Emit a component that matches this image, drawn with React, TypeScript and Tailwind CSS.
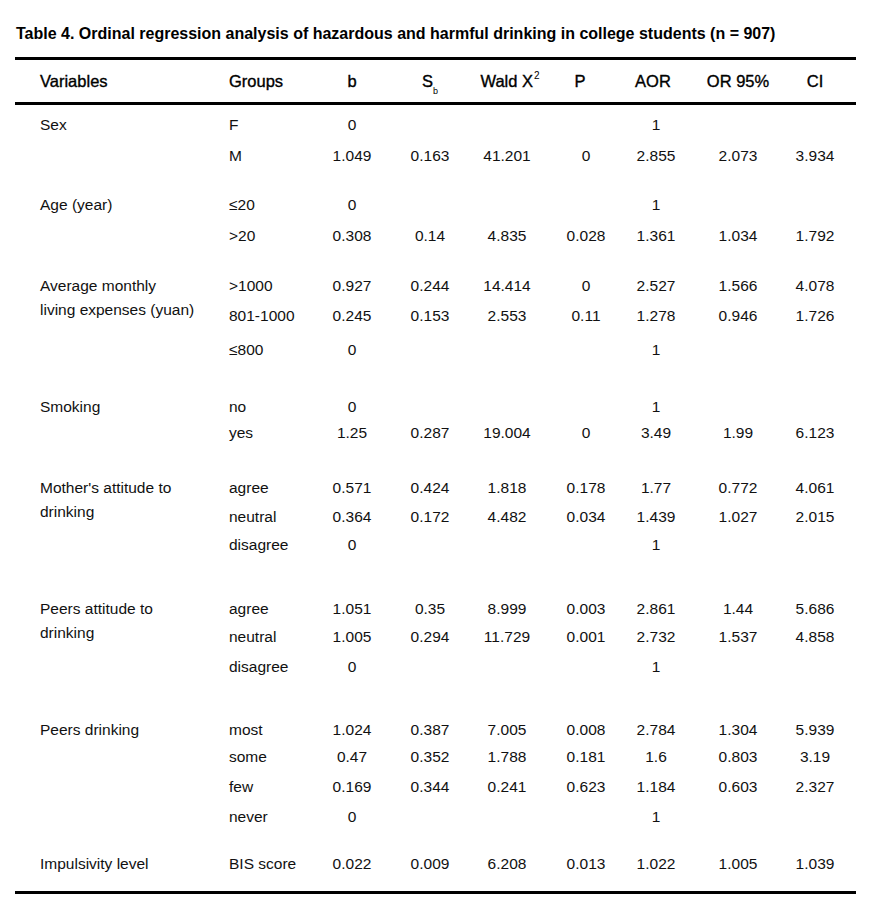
import React from "react";

type Row = {
  group: string;
  vals: string[]; // b, Sb, Wald, P, AOR, OR95, CI
  h: number; // distance to next row top
};

type Block = {
  label: string[];
  rows: Row[];
};

const blocks: Block[] = [
  {
    label: ["Sex"],
    rows: [
      { group: "F", vals: ["0", "", "", "", "1", "", ""], h: 31 },
      { group: "M", vals: ["1.049", "0.163", "41.201", "0", "2.855", "2.073", "3.934"], h: 49 },
    ],
  },
  {
    label: ["Age (year)"],
    rows: [
      { group: "≤20", vals: ["0", "", "", "", "1", "", ""], h: 31 },
      { group: ">20", vals: ["0.308", "0.14", "4.835", "0.028", "1.361", "1.034", "1.792"], h: 50 },
    ],
  },
  {
    label: ["Average monthly", "living expenses (yuan)"],
    rows: [
      { group: ">1000", vals: ["0.927", "0.244", "14.414", "0", "2.527", "1.566", "4.078"], h: 30 },
      { group: "801-1000", vals: ["0.245", "0.153", "2.553", "0.11", "1.278", "0.946", "1.726"], h: 34 },
      { group: "≤800", vals: ["0", "", "", "", "1", "", ""], h: 57 },
    ],
  },
  {
    label: ["Smoking"],
    rows: [
      { group: "no", vals: ["0", "", "", "", "1", "", ""], h: 26 },
      { group: "yes", vals: ["1.25", "0.287", "19.004", "0", "3.49", "1.99", "6.123"], h: 55 },
    ],
  },
  {
    label: ["Mother's attitude to", "drinking"],
    rows: [
      { group: "agree", vals: ["0.571", "0.424", "1.818", "0.178", "1.77", "0.772", "4.061"], h: 29 },
      { group: "neutral", vals: ["0.364", "0.172", "4.482", "0.034", "1.439", "1.027", "2.015"], h: 28 },
      { group: "disagree", vals: ["0", "", "", "", "1", "", ""], h: 64 },
    ],
  },
  {
    label: ["Peers attitude to", "drinking"],
    rows: [
      { group: "agree", vals: ["1.051", "0.35", "8.999", "0.003", "2.861", "1.44", "5.686"], h: 28 },
      { group: "neutral", vals: ["1.005", "0.294", "11.729", "0.001", "2.732", "1.537", "4.858"], h: 30 },
      { group: "disagree", vals: ["0", "", "", "", "1", "", ""], h: 63 },
    ],
  },
  {
    label: ["Peers drinking"],
    rows: [
      { group: "most", vals: ["1.024", "0.387", "7.005", "0.008", "2.784", "1.304", "5.939"], h: 27 },
      { group: "some", vals: ["0.47", "0.352", "1.788", "0.181", "1.6", "0.803", "3.19"], h: 30 },
      { group: "few", vals: ["0.169", "0.344", "0.241", "0.623", "1.184", "0.603", "2.327"], h: 30 },
      { group: "never", vals: ["0", "", "", "", "1", "", ""], h: 47 },
    ],
  },
  {
    label: ["Impulsivity level"],
    rows: [
      { group: "BIS score", vals: ["0.022", "0.009", "6.208", "0.013", "1.022", "1.005", "1.039"], h: 42 },
    ],
  },
];

// column widths after the variable column
const colClass = [
  "w-[78px]",
  "w-[78px]",
  "w-[76px]",
  "w-[82px]",
  "w-[58px]",
  "w-[106px]",
  "w-[48px]",
];

export default function App() {
  return (
    <div className="min-h-screen bg-white font-['Liberation_Sans',Arial,sans-serif] text-[15.5px] text-[#111]">
      <div className="pl-[15px] pt-[24px] w-[856px]">
        <h1 className="pl-[1px] text-[16px] leading-[20px] font-bold text-black">
          Table 4. Ordinal regression analysis of hazardous and harmful drinking in college students (n = 907)
        </h1>

        <div className="mt-[13px] border-t-[3px] border-b-[3px] border-black">
          {/* header */}
          <div className="flex items-center h-[42px] pl-[25px] text-[16.5px] text-black [-webkit-text-stroke:0.35px_black]">
            <div className="w-[189px]">Variables</div>
            <div className="w-[84px]">Groups</div>
            <div className={`${colClass[0]} text-center`}>b</div>
            <div className={`${colClass[1]} text-center`}>
              S<sub className="text-[9px] align-[-5px] [-webkit-text-stroke:0]">b</sub>
            </div>
            <div className={`${colClass[2]} text-center pl-[6px]`}>
              Wald X<sup className="text-[10px] align-[3px] ml-[1px] [-webkit-text-stroke:0]">2</sup>
            </div>
            <div className={`${colClass[3]} text-center pr-[12px]`}>P</div>
            <div className={`${colClass[4]} text-center pr-[6px]`}>AOR</div>
            <div className={`${colClass[5]} text-center`}>OR 95%</div>
            <div className={`${colClass[6]} text-center`}>CI</div>
          </div>
        </div>

        <div className="pt-[5px] border-b-[3px] border-black">
          {blocks.map((block, bi) => (
            <div key={bi} className="flex pl-[25px]">
              <div className="w-[189px] pt-[3px] leading-[24px]">
                {block.label.map((l, i) => (
                  <div key={i}>{l}</div>
                ))}
              </div>
              <div className="flex flex-col">
                {block.rows.map((row, ri) => (
                  <div
                    key={ri}
                    className="flex items-start"
                    style={{ height: row.h }}
                  >
                    <div className="w-[84px] leading-[30px]">{row.group}</div>
                    {row.vals.map((v, vi) => (
                      <div
                        key={vi}
                        className={`${colClass[vi]} text-center leading-[30px]`}
                      >
                        {v}
                      </div>
                    ))}
                  </div>
                ))}
              </div>
            </div>
          ))}
        </div>
      </div>
    </div>
  );
}
